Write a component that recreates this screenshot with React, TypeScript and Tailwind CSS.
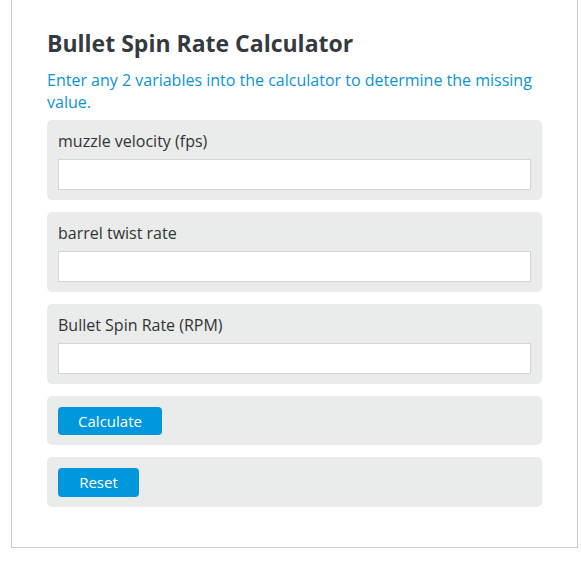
import { useState } from 'react'

const font = { fontFamily: '"Open Sans", "Noto Sans", Arial, sans-serif' }

function Field({ label, value, onChange }: { label: string; value: string; onChange: (v: string) => void }) {
  return (
    <div className="rounded-[5px] bg-[#eaebeb] px-[11px] pt-[10px] pb-[10px]">
      <label className="block text-[16px] leading-[22px] text-[#333]">{label}</label>
      <input
        className="mt-[7px] block h-[31px] w-full border border-[#d4d4d4] bg-white px-2 text-[15px] outline-none"
        value={value}
        onChange={(e) => onChange(e.target.value)}
      />
    </div>
  )
}

export default function App() {
  const [form, setForm] = useState({ velocity: '', twist: '', rpm: '' })

  function calculate() {
    const v = parseFloat(form.velocity)
    const t = parseFloat(form.twist)
    const r = parseFloat(form.rpm)
    if (!isNaN(v) && !isNaN(t)) setForm({ ...form, rpm: String((v * 720) / t) })
    else if (!isNaN(v) && !isNaN(r)) setForm({ ...form, twist: String((v * 720) / r) })
    else if (!isNaN(t) && !isNaN(r)) setForm({ ...form, velocity: String((r * t) / 720) })
  }

  return (
    <div className="min-h-screen bg-white pl-[11px]" style={font}>
      <div className="w-[567px] border border-t-0 border-[#cccccc] px-[35px] pt-[28px] pb-[40px]">
        <h1 className="text-[23px] font-bold leading-[30px] text-[#353a40]">Bullet Spin Rate Calculator</h1>
        <p className="mt-[11px] text-[16px] leading-[22px] text-[#0a94d6]">
          Enter any 2 variables into the calculator to determine the missing value.
        </p>
        <div className="mt-[7px] flex w-[495px] flex-col gap-[12px]">
          <Field label="muzzle velocity (fps)" value={form.velocity} onChange={(v) => setForm({ ...form, velocity: v })} />
          <Field label="barrel twist rate" value={form.twist} onChange={(v) => setForm({ ...form, twist: v })} />
          <Field label="Bullet Spin Rate (RPM)" value={form.rpm} onChange={(v) => setForm({ ...form, rpm: v })} />
          <div className="rounded-[5px] bg-[#eaebeb] px-[11px] pt-[11px] pb-[10px]">
            <button onClick={calculate} className="block h-[28px] w-[104px] rounded-[4px] bg-[#0097dc] text-[15px] leading-[28px] text-white">
              Calculate
            </button>
          </div>
          <div className="rounded-[5px] bg-[#eaebeb] px-[11px] pt-[11px] pb-[10px]">
            <button onClick={() => setForm({ velocity: '', twist: '', rpm: '' })} className="block h-[29px] w-[81px] rounded-[4px] bg-[#0097dc] text-[15px] leading-[29px] text-white">
              Reset
            </button>
          </div>
        </div>
      </div>
    </div>
  )
}
